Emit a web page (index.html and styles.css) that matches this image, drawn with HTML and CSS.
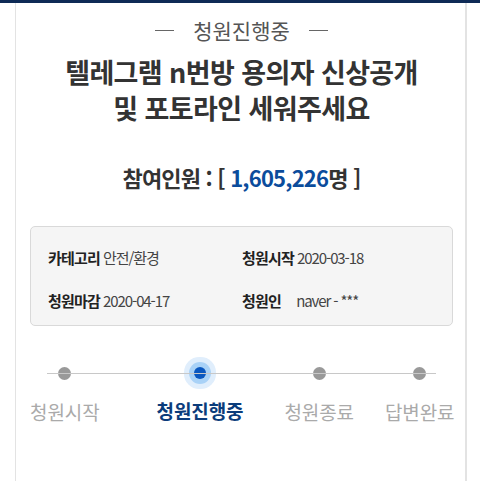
FILE: index.html
```html
<!DOCTYPE html>
<html lang="ko">
<head>
    <meta charset="UTF-8">
    <meta name="viewport" content="width=device-width, initial-scale=1.0">
    <title>청원진행중</title>
    <link rel="stylesheet" href="styles.css">
</head>
<body>
    <div class="topbar"></div>
    <div class="petition">
        <p class="status"><span class="dash"></span>청원진행중<span class="dash"></span></p>
        <h1 class="title">텔레그램 n번방 용의자 신상공개<br>및 포토라인 세워주세요</h1>
        <p class="count">참여인원 : [ <span class="num">1,605,226</span>명 ]</p>

        <div class="info">
            <div class="info-item"><b>카테고리</b> 안전/환경</div>
            <div class="info-item"><b>청원시작</b> 2020-03-18</div>
            <div class="info-item"><b>청원마감</b> 2020-04-17</div>
            <div class="info-item"><b>청원인</b> <span class="author">naver - ***</span></div>
        </div>

        <div class="steps">
            <div class="step">
                <span class="dot"></span>
                <span class="label">청원시작</span>
            </div>
            <div class="step is-active">
                <span class="dot"></span>
                <span class="label">청원진행중</span>
            </div>
            <div class="step">
                <span class="dot"></span>
                <span class="label">청원종료</span>
            </div>
            <div class="step">
                <span class="dot"></span>
                <span class="label">답변완료</span>
            </div>
        </div>
    </div>
</body>
</html>
```

FILE: styles.css
```css
body {
    font-family: "Noto Sans CJK KR", "Noto Sans", sans-serif;
    margin: 0;
    padding: 0;
    background-color: white;
    color: #333;
}
.topbar {
    height: 3px;
    background-color: #0e2a56;
}
.petition {
    margin: 0 13px 0 15px;
    border-left: 1px solid #e3e3e3;
    border-right: 2px solid #e3e3e3;
    min-height: 478px;
    box-sizing: border-box;
    padding: 0 12px 0 14px;
}
.status {
    margin: 0;
    padding-top: 9px;
    height: 36px;
    font-size: 21px;
    color: #555;
    text-align: center;
    display: flex;
    align-items: center;
    justify-content: center;
    gap: 19px;
}
.dash {
    width: 19px;
    height: 1px;
    background-color: #666;
}
.title {
    margin: 6px 0 0;
    font-size: 27px;
    line-height: 36px;
    font-weight: 700;
    text-align: center;
    letter-spacing: -0.6px;
    color: #333;
}
.count {
    margin: 36px 0 0;
    font-size: 22px;
    font-weight: 700;
    text-align: center;
    letter-spacing: -0.8px;
    line-height: 30px;
}
.num {
    color: #0b4c9c;
}
.info {
    margin-top: 34px;
    background-color: #f5f5f5;
    border: 1px solid #d9d9d9;
    border-radius: 5px;
    height: 100px;
    box-sizing: border-box;
    display: grid;
    grid-template-columns: 194px 1fr;
    padding: 5px 0 0 17px;
    align-content: center;
    row-gap: 22px;
    font-size: 15px;
    letter-spacing: -1.1px;
    color: #444;
}
.info-item b {
    color: #222;
    letter-spacing: -0.8px;
}
.author {
    margin-left: 12px;
}
.steps {
    margin-top: 34px;
    position: relative;
    display: flex;
}
.steps::before {
    content: "";
    position: absolute;
    left: 17px;
    right: 17px;
    top: 13px;
    height: 1px;
    background-color: #c8c8c8;
}
.step {
    display: flex;
    flex-direction: column;
    align-items: center;
    flex-shrink: 0;
}
.step:nth-child(2) { margin-left: 57px; }
.step:nth-child(3) { margin-left: 41px; }
.step:nth-child(4) { margin-left: 31px; }
.dot {
    width: 13px;
    height: 13px;
    margin: 7px 0;
    border-radius: 50%;
    background-color: #999;
}
.step.is-active .dot {
    width: 12px;
    height: 12px;
    background-color: #0a57bf;
    box-shadow: 0 0 0 5px #a9d2f7, 0 0 0 10px #e0eefc;
}
.label {
    margin-top: 12px;
    font-size: 19px;
    color: #aaa;
    letter-spacing: -0.1px;
    line-height: 26px;
    white-space: nowrap;
}
.step.is-active .label {
    color: #0b3c7b;
    font-weight: 700;
}
```
